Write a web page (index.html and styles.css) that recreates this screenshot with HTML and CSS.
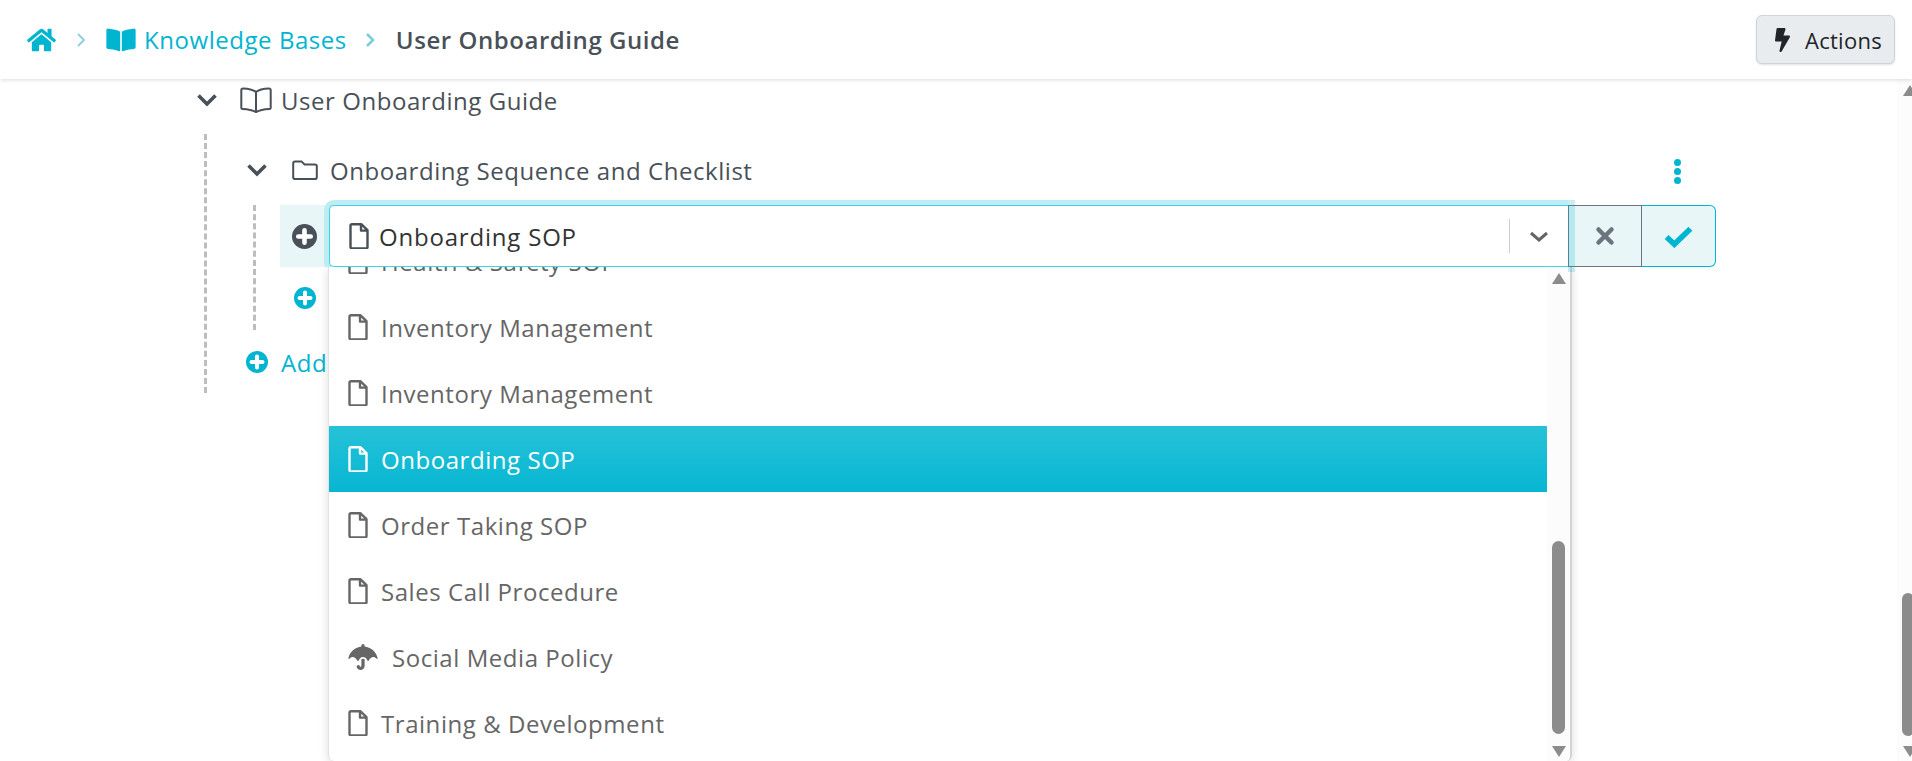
FILE: index.html
```html
<!DOCTYPE html>
<html>
<head>
    <title>User Onboarding Guide</title>
    <link rel="stylesheet" href="styles.css">
</head>
<body>
    <svg class="icon-defs" width="0" height="0">
        <symbol id="i-file" viewBox="0 0 20 26">
            <path d="M1.500 2.800c0-.9.700-1.600 1.600-1.600h9.200l6.200 6v16.700c0 .9-.7 1.600-1.600 1.600H3.100c-.9 0-1.600-.7-1.600-1.600zM12 1.400v6.200h6.300" fill="none" stroke="currentColor" stroke-width="2.400" stroke-linejoin="round"/>
        </symbol>
        <symbol id="i-plus" viewBox="0 0 24 24">
            <circle cx="12" cy="12" r="12" fill="currentColor"/>
            <path d="M12 6v12M6 12h12" stroke="#fff" stroke-width="4.400" stroke-linecap="round"/>
        </symbol>
    </svg>

    <header class="topbar">
        <nav class="crumbs">
            <svg class="crumb-home" viewBox="0 0 576 512"><path fill="currentColor" d="M280.37 148.26L96 300.11V464a16 16 0 0 0 16 16l112.06-.29a16 16 0 0 0 15.92-16V368a16 16 0 0 1 16-16h64a16 16 0 0 1 16 16v95.64a16 16 0 0 0 16 16.05L464 480a16 16 0 0 0 16-16V300L295.67 148.26a12.19 12.19 0 0 0-15.3 0zM571.6 251.47L488 182.56V44.05a12 12 0 0 0-12-12h-56a12 12 0 0 0-12 12v72.61L318.47 43a48 48 0 0 0-61 0L4.34 251.47a12 12 0 0 0-1.6 16.9l25.5 31A12 12 0 0 0 45.15 301l235.22-193.74a12.19 12.19 0 0 1 15.3 0L530.9 301a12 12 0 0 0 16.9-1.6l25.5-31a12 12 0 0 0-1.7-16.93z"/></svg>
            <svg class="crumb-sep sep-first" viewBox="0 0 10 16"><path d="M2 2l6 6-6 6" fill="none" stroke="currentColor" stroke-width="1.800"/></svg>
            <svg class="crumb-book" viewBox="0 0 576 512"><path fill="currentColor" d="M542.22 32.05c-54.8 3.11-163.72 14.43-230.96 55.59-4.64 2.84-7.27 7.89-7.27 13.17v363.87c0 11.55 12.63 18.85 23.28 13.49 69.18-34.82 169.23-44.32 218.7-46.92 16.89-.89 30.02-14.43 30.02-30.66V62.75c.01-17.71-15.35-31.74-33.77-30.7zM264.73 87.64C197.5 46.48 88.58 35.17 33.78 32.05 15.36 31.01 0 45.04 0 62.75V400.6c0 16.24 13.13 29.78 30.02 30.66 49.49 2.6 149.59 12.11 218.77 46.95 10.62 5.35 23.21-1.94 23.21-13.46V100.63c0-5.29-2.62-10.14-7.27-12.99z"/></svg>
            <a class="crumb-link">Knowledge Bases</a>
            <svg class="crumb-sep sep-second" viewBox="0 0 10 16"><path d="M2 2l6 6-6 6" fill="none" stroke="currentColor" stroke-width="2.600"/></svg>
            <strong class="crumb-current">User Onboarding Guide</strong>
        </nav>
        <button class="actions-btn">
            <svg class="bolt" viewBox="0 0 320 512"><path fill="currentColor" d="M296 160H180.6l42.6-129.8C227.2 15 215.7 0 200 0H56C44 0 33.8 8.9 32.2 20.8l-32 240C-1.700 275.2 9.500 288 24 288h118.7L96.600 482.5c-3.600 15.200 8 29.500 23.300 29.500 8.400 0 16.400-4.400 20.800-12l176-304c9.300-15.900-2.200-36-20.700-36z"/></svg>
            Actions
        </button>
    </header>

    <main class="tree">
        <div class="kb-row">
            <svg class="chevron" viewBox="0 0 22 14"><path d="M2.500 2.500l8.500 8.500 8.500-8.500" fill="none" stroke="currentColor" stroke-width="3.600"/></svg>
            <svg class="book-outline" viewBox="0 0 32 26"><path d="M16 5c-3-2.500-8-3.400-13-3.500-.9 0-1.700.7-1.700 1.600v17.500c0 .8.700 1.500 1.500 1.500 5 .2 9.500 1 13.200 3 3.700-2 8.200-2.800 13.200-3 .8 0 1.500-.7 1.500-1.500V3.100c0-.9-.8-1.600-1.700-1.600C24 1.600 19 2.500 16 5zM16 5v19.500" fill="none" stroke="currentColor" stroke-width="2"/></svg>
            <span>User Onboarding Guide</span>
        </div>

        <div class="branch branch-outer">
            <div class="folder-row">
                <svg class="chevron" viewBox="0 0 22 14"><path d="M2.500 2.500l8.500 8.500 8.500-8.500" fill="none" stroke="currentColor" stroke-width="3.600"/></svg>
                <svg class="folder" viewBox="0 0 26 20"><path d="M1.200 3.200c0-1 .8-1.800 1.800-1.800h6.500l3 3H23c1 0 1.800.8 1.800 1.800v11c0 1-.8 1.800-1.800 1.800H3c-1 0-1.800-.8-1.800-1.800z" fill="none" stroke="currentColor" stroke-width="2"/></svg>
                <span>Onboarding Sequence and Checklist</span>
                <span class="kebab"><i></i><i></i><i></i></span>
            </div>

            <div class="branch branch-inner">
                <div class="edit-row">
                    <div class="edit-handle">
                        <svg class="plus dark"><use href="#i-plus"/></svg>
                    </div>
                    <div class="select">
                        <div class="select-control">
                            <svg class="file"><use href="#i-file"/></svg>
                            <span class="select-value">Onboarding SOP</span>
                            <span class="select-divider"></span>
                            <svg class="select-arrow" viewBox="0 0 20 12"><path d="M2 2l8 7 8-7" fill="none" stroke="currentColor" stroke-width="3"/></svg>
                        </div>
                        <div class="select-menu">
                            <ul class="options">
                                <li class="option"><svg class="file"><use href="#i-file"/></svg>Health &amp; Safety SOP</li>
                                <li class="option"><svg class="file"><use href="#i-file"/></svg>Inventory Management</li>
                                <li class="option"><svg class="file"><use href="#i-file"/></svg>Inventory Management</li>
                                <li class="option selected"><svg class="file"><use href="#i-file"/></svg>Onboarding SOP</li>
                                <li class="option"><svg class="file"><use href="#i-file"/></svg>Order Taking SOP</li>
                                <li class="option"><svg class="file"><use href="#i-file"/></svg>Sales Call Procedure</li>
                                <li class="option"><svg class="umbrella" viewBox="0 0 576 512"><path fill="currentColor" d="M575.7 280.800C547.100 144.500 437.300 62.600 320 49.900V32c0-17.700-14.300-32-32-32s-32 14.300-32 32v17.900C138.300 62.600 29.500 144.500.3 280.800c-2.200 10.100 8.500 21.300 18.700 11.400 52-55 107.700-52.400 158.600 37 5.300 9.500 14.900 8.600 19.700 0 20.200-35.400 44.900-73.200 90.700-73.200 58.500 0 88.200 68.800 90.700 73.200 4.800 8.600 14.400 9.500 19.700 0 51-89.500 107.100-91.400 158.600-37 10.300 10 20.900-1.300 18.700-11.400zM256 301.700V432c0 8.800-7.200 16-16 16-7.800 0-13.200-5.300-15.100-10.700-5.900-16.700-24.100-25.400-40.800-19.500-16.700 5.900-25.400 24.200-19.500 40.800 11.200 31.900 41.600 53.300 75.400 53.300 44.100 0 80-35.900 80-80V301.600c-9.100-7.900-19.800-13.600-32-13.600-12.300 0-23 5.800-32 13.700z"/></svg>Social Media Policy</li>
                                <li class="option"><svg class="file"><use href="#i-file"/></svg>Training &amp; Development</li>
                            </ul>
                            <div class="menu-scroll">
                                <span class="arrow-up"></span>
                                <span class="menu-thumb"></span>
                                <span class="arrow-down"></span>
                            </div>
                        </div>
                    </div>
                    <button class="edit-btn cancel">
                        <svg viewBox="0 0 20 20"><path d="M3.500 3.500l13 13M16.500 3.500l-13 13" stroke="currentColor" stroke-width="4.500" stroke-linecap="round"/></svg>
                    </button>
                    <button class="edit-btn confirm">
                        <svg viewBox="0 0 28 22"><path d="M2.500 11.500l7.500 7L25.500 3.500" fill="none" stroke="currentColor" stroke-width="5.400"/></svg>
                    </button>
                </div>
                <div class="add-row inner-add">
                    <svg class="plus"><use href="#i-plus"/></svg>
                </div>
            </div>

            <div class="add-row outer-add">
                <svg class="plus"><use href="#i-plus"/></svg>
                <span>Add</span>
            </div>
        </div>

        <div class="page-scroll">
            <span class="arrow-up"></span>
            <span class="page-thumb"></span>
            <span class="arrow-down"></span>
        </div>
    </main>
</body>
</html>
```

FILE: styles.css
```css
* {
    box-sizing: border-box;
}
html, body {
    height: 100%;
}
body {
    margin: 0;
    overflow: hidden;
    font-family: "Open Sans", "Noto Sans", sans-serif;
    font-size: 24px;
    letter-spacing: 0.55px;
    color: #495057;
    background-color: #fff;
}
.icon-defs {
    display: block;
    height: 0;
}

/* top bar */
.topbar {
    position: relative;
    z-index: 3;
    height: 79px;
    display: flex;
    align-items: center;
    justify-content: space-between;
    padding: 0 17px 0 27px;
    background-color: #fff;
    box-shadow: 0 1px 4px rgba(0, 0, 0, 0.14);
}
.crumbs {
    display: flex;
    align-items: center;
}
.crumb-home {
    width: 29px;
    height: 26px;
    color: #00b5d0;
}
.crumb-sep {
    width: 10px;
    height: 16px;
}
.sep-first {
    margin: 0 20px 0 20px;
    color: #8ccfdb;
}
.sep-second {
    margin: 0 21px 0 18px;
    color: #7fcbd8;
}
.crumb-book {
    width: 30px;
    height: 26px;
    margin-right: 8px;
    color: #00b5d0;
}
.crumb-link {
    color: #00b5d0;
}
.crumb-current {
    font-weight: 600;
}
.actions-btn {
    width: 139px;
    height: 49px;
    padding: 0 0 0 6px;
    display: flex;
    align-items: center;
    justify-content: center;
    gap: 15px;
    font: inherit;
    font-size: 22px;
    letter-spacing: 0.3px;
    color: #212529;
    background-color: #e9ecef;
    border: 1px solid #ced4da;
    border-radius: 6px;
    box-shadow: 0 1px 2px rgba(0, 0, 0, 0.12);
}
.bolt {
    width: 15px;
    height: 24px;
}

/* tree */
.tree {
    position: relative;
    height: 682px;
    padding-left: 196px;
}
.kb-row {
    height: 42px;
    display: flex;
    align-items: center;
}
.chevron {
    width: 22px;
    height: 14px;
    color: #495057;
    flex-shrink: 0;
}
.book-outline {
    width: 32px;
    height: 26px;
    margin: 0 9px 0 22px;
}
.branch {
    border-left: 3px dashed #bdbdbd;
}
.branch-outer {
    margin-left: 8px;
    margin-top: 13px;
    height: 259px;
    padding-left: 39px;
}
.folder-row {
    position: relative;
    height: 71px;
    padding-top: 1px;
    display: flex;
    align-items: center;
}
.folder {
    width: 26px;
    height: 20px;
    margin: 0 12px 0 24px;
}
.kebab {
    position: absolute;
    left: 1428px;
    top: 25px;
    display: flex;
    flex-direction: column;
    gap: 2px;
}
.kebab i {
    width: 7px;
    height: 7px;
    border-radius: 50%;
    background-color: #00b5d0;
}
.branch-inner {
    height: 125px;
    margin-left: 7px;
}
.edit-row {
    display: flex;
    height: 62px;
    margin-left: 24px;
}
.edit-handle {
    width: 49px;
    flex-shrink: 0;
    display: flex;
    align-items: center;
    justify-content: center;
    background-color: #e8f6f8;
}
.plus {
    width: 22px;
    height: 22px;
    color: #00b5d0;
    flex-shrink: 0;
}
.plus.dark {
    width: 25px;
    height: 25px;
    color: #495057;
}

/* select */
.select {
    position: relative;
    width: 1239px;
    flex-shrink: 0;
    z-index: 2;
}
.select-control {
    position: relative;
    z-index: 2;
    height: 62px;
    display: flex;
    align-items: center;
    padding: 0 19px 0 19px;
    color: #333;
    background-color: #fff;
    border: 1px solid #3fd3e8;
    border-right: 0;
    border-radius: 5px 0 0 5px;
    box-shadow: 0 0 0 5px #bdecf3;
    clip-path: inset(-5px 0 0 -5px);
}
.select-control .file {
    color: #495057;
    width: 20px;
    height: 26px;
    margin-right: 10px;
}
.select-value {
    flex: 1;
    letter-spacing: 0.8px;
}
.select-divider {
    width: 1px;
    height: 34px;
    background-color: #ccc;
}
.select-arrow {
    width: 20px;
    height: 12px;
    margin: 2px 0 0 19px;
    color: #666;
}
.select-menu {
    position: absolute;
    top: 62px;
    left: -1px;
    width: 1244px;
    height: 494px;
    display: flex;
    background-color: #fff;
    border-right: 2px solid #d4d4d4;
    border-left: 1px solid #e2e2e2;
    border-radius: 0 0 6px 6px;
    box-shadow: 0 2px 10px rgba(0, 0, 0, 0.14);
    overflow: hidden;
}
.options {
    flex: 1;
    margin: -39px 0 0;
    padding: 0;
    list-style: none;
    color: #666;
}
.option {
    height: 66px;
    display: flex;
    align-items: center;
    padding-left: 19px;
}
.option .file {
    width: 20px;
    height: 26px;
    margin-right: 13px;
    flex-shrink: 0;
}
.umbrella {
    width: 30px;
    height: 26px;
    margin-right: 14px;
}
.option.selected {
    color: #fff;
    background-image: linear-gradient(#26c2d8, #07b6d2);
}
.menu-scroll {
    width: 23px;
    display: flex;
    flex-direction: column;
    align-items: center;
    background-color: #fcfcfc;
    padding: 6px 0 4px;
}
.menu-thumb {
    width: 13px;
    height: 193px;
    margin-top: auto;
    margin-bottom: 12px;
    border-radius: 7px;
    background-color: #8c8c8c;
}
.arrow-up, .arrow-down {
    width: 0;
    height: 0;
    border-left: 7px solid transparent;
    border-right: 7px solid transparent;
}
.arrow-up {
    border-bottom: 11px solid #8c8c8c;
}
.arrow-down {
    border-top: 11px solid #8c8c8c;
}

/* save / cancel */
.edit-btn {
    width: 74px;
    height: 62px;
    padding: 0;
    flex-shrink: 0;
    display: flex;
    align-items: center;
    justify-content: center;
    background-color: #e8f6f8;
    border: 1px solid;
}
.edit-btn.cancel {
    position: relative;
    z-index: 3;
    color: #6c757d;
    border-color: #6c757d;
}
.edit-btn.cancel::before {
    content: "";
    position: absolute;
    left: -1px;
    top: -6px;
    bottom: -6px;
    width: 7px;
    background-color: rgba(0, 181, 208, 0.22);
}
.edit-btn.cancel svg {
    width: 20px;
    height: 20px;
}
.edit-btn.confirm {
    color: #00b5d0;
    border-color: #00b5d0;
    border-left: 0;
    border-radius: 0 6px 6px 0;
}
.edit-btn.confirm svg {
    width: 29px;
    height: 23px;
}
.add-row {
    display: flex;
    align-items: center;
    color: #00b5d0;
}
.inner-add {
    height: 62px;
    margin-left: 38px;
}
.outer-add {
    height: 44px;
    margin-top: 10px;
    gap: 13px;
}

/* page scrollbar */
.page-scroll {
    position: absolute;
    top: 0;
    right: 0;
    bottom: 0;
    width: 15px;
    display: flex;
    flex-direction: column;
    align-items: center;
    padding: 6px 0 4px;
    background-color: #fcfcfc;
}
.page-scroll .arrow-up, .page-scroll .arrow-down {
    margin-left: 10px;
}
.page-thumb {
    width: 12px;
    height: 143px;
    margin: auto -2px 10px 5px;
    border-radius: 6px;
    background-color: #8c8c8c;
}
```
